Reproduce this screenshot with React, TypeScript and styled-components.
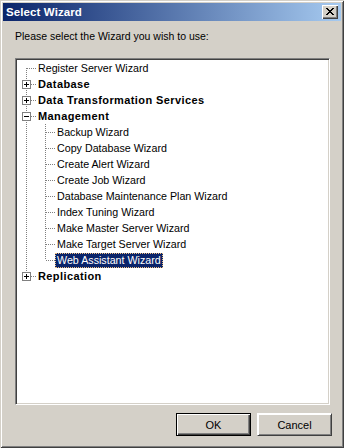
import styled, { createGlobalStyle } from "styled-components";

const GlobalStyle = createGlobalStyle`
  html, body {
    margin: 0;
    padding: 0;
    background: #d4d0c8;
  }
`;

type Node = {
  label: string;
  bold?: boolean;
  expander?: "plus" | "minus";
  children?: Node[];
  selected?: boolean;
};

const tree: Node[] = [
  { label: "Register Server Wizard" },
  { label: "Database", bold: true, expander: "plus" },
  { label: "Data Transformation Services", bold: true, expander: "plus" },
  {
    label: "Management",
    bold: true,
    expander: "minus",
    children: [
      { label: "Backup Wizard" },
      { label: "Copy Database Wizard" },
      { label: "Create Alert Wizard" },
      { label: "Create Job Wizard" },
      { label: "Database Maintenance Plan Wizard" },
      { label: "Index Tuning Wizard" },
      { label: "Make Master Server Wizard" },
      { label: "Make Target Server Wizard" },
      { label: "Web Assistant Wizard", selected: true },
    ],
  },
  { label: "Replication", bold: true, expander: "plus" },
];

// one 19px indent column: guides drawn with dotted strokes
const Guide = ({
  up,
  down,
  across,
  expander,
}: {
  up?: boolean;
  down?: boolean;
  across?: boolean;
  expander?: "plus" | "minus";
}) => (
  <GuideCell width="19" height="16" viewBox="0 0 19 16">
    <g stroke="#808080" strokeWidth="1" strokeDasharray="1 1" shapeRendering="crispEdges">
      {up && <line x1="9.5" y1="0" x2="9.5" y2="8" />}
      {down && <line x1="9.5" y1="8" x2="9.5" y2="16" />}
      {across && <line x1="10" y1="8.5" x2="19" y2="8.5" />}
    </g>
    {expander && (
      <g shapeRendering="crispEdges">
        <rect x="5.5" y="4.5" width="8" height="8" fill="#fff" stroke="#808080" />
        <line x1="7" y1="8.5" x2="12" y2="8.5" stroke="#000" />
        {expander === "plus" && <line x1="9.5" y1="6" x2="9.5" y2="11" stroke="#000" />}
      </g>
    )}
  </GuideCell>
);

const App = () => {
  const rows: JSX.Element[] = [];
  tree.forEach((node, i) => {
    const last = i === tree.length - 1;
    rows.push(
      <Row key={node.label}>
        <Guide up={i > 0} down={!last} across expander={node.expander} />
        <Label $bold={node.bold} $selected={node.selected}>
          {node.label}
        </Label>
      </Row>
    );
    node.children?.forEach((child, j) => {
      const lastChild = j === node.children!.length - 1;
      rows.push(
        <Row key={child.label}>
          <Guide up={!last} down={!last} />
          <Guide up down={!lastChild} across />
          <Label $bold={child.bold} $selected={child.selected}>
            {child.label}
          </Label>
        </Row>
      );
    });
  });

  return (
    <>
      <GlobalStyle />
      <Window>
        <TitleBar>
          <Title>Select Wizard</Title>
          <CloseButton>
            <svg width="8" height="7" viewBox="0 0 8 7" shapeRendering="crispEdges">
              <path
                d="M0 0h2v1h-2zM6 0h2v1h-2zM1 1h2v1h-2zM5 1h2v1h-2zM2 2h4v1h-4zM3 3h2v1h-2zM2 4h4v1h-4zM1 5h2v1h-2zM5 5h2v1h-2zM0 6h2v1h-2zM6 6h2v1h-2z"
                fill="#000"
              />
            </svg>
          </CloseButton>
        </TitleBar>
        <Body>
          <Prompt>Please select the Wizard you wish to use:</Prompt>
          <TreeView>{rows}</TreeView>
          <ButtonRow>
            <Button $default>OK</Button>
            <Button>Cancel</Button>
          </ButtonRow>
        </Body>
      </Window>
    </>
  );
};

const Window = styled.div`
  width: 344px;
  height: 448px;
  box-sizing: border-box;
  padding: 3px;
  display: flex;
  flex-direction: column;
  background: #d4d0c8;
  box-shadow: inset 1px 1px #d4d0c8, inset -1px -1px #404040,
    inset 2px 2px #ffffff, inset -2px -2px #808080;
  font-family: "Liberation Sans", Arial, sans-serif;
  font-size: 11px;
  color: #000;
`;

const TitleBar = styled.div`
  height: 18px;
  display: flex;
  align-items: center;
  justify-content: space-between;
  padding: 0 3px 0 3px;
  background: linear-gradient(to right, #0a246a, #a6caf0);
`;

const Title = styled.span`
  color: #fff;
  font-weight: bold;
  font-size: 11.5px;
  letter-spacing: 0.1px;
`;

const CloseButton = styled.div`
  width: 16px;
  height: 14px;
  box-sizing: border-box;
  display: flex;
  align-items: center;
  justify-content: center;
  background: #d4d0c8;
  box-shadow: inset 1px 1px #ffffff, inset -1px -1px #404040,
    inset -2px -2px #808080;
  padding-bottom: 1px;
`;

const Body = styled.div`
  flex: 1;
  display: flex;
  flex-direction: column;
  padding: 9px 9px 9px 12px;
`;

const Prompt = styled.div`
  height: 13px;
  line-height: 13px;
  font-size: 10.5px;
  margin-bottom: 15px;
`;

const TreeView = styled.div`
  height: 347px;
  margin-right: 2px;
  box-sizing: border-box;
  background: #fff;
  border: 1px solid;
  border-color: #808080 #ffffff #ffffff #808080;
  box-shadow: inset 1px 1px #404040, inset -1px -1px #d4d0c8;
  padding: 1px;
  display: flex;
  flex-direction: column;
`;

const Row = styled.div`
  height: 16px;
  display: flex;
  align-items: stretch;
  white-space: nowrap;
`;

const GuideCell = styled.svg`
  flex: none;
  display: block;
`;

const Label = styled.span<{ $bold?: boolean; $selected?: boolean }>`
  padding: 0 2px;
  margin: 1px 0 0;
  height: 15px;
  line-height: 14px;
  box-sizing: border-box;
  font-size: ${(p) => (p.$bold ? "11px" : "10.7px")};
  letter-spacing: ${(p) => (p.$bold ? "0.4px" : "0")};
  font-weight: ${(p) => (p.$bold ? "bold" : "normal")};
  background: ${(p) => (p.$selected ? "#0a246a" : "transparent")};
  color: ${(p) => (p.$selected ? "#fff" : "#000")};
  outline: ${(p) => (p.$selected ? "1px dotted #f0c080" : "none")};
  outline-offset: -1px;
`;

const ButtonRow = styled.div`
  margin-top: 8px;
  display: flex;
  justify-content: flex-end;
  gap: 6px;
`;

const Button = styled.div<{ $default?: boolean }>`
  width: 75px;
  height: 23px;
  box-sizing: border-box;
  display: flex;
  align-items: center;
  justify-content: center;
  background: #d4d0c8;
  border: 1px solid ${(p) => (p.$default ? "#000" : "transparent")};
  box-shadow: ${(p) =>
    p.$default
      ? "inset 1px 1px #ffffff, inset -1px -1px #404040, inset -2px -2px #808080"
      : "inset 1px 1px #ffffff, inset -1px -1px #808080"};
  ${(p) =>
    !p.$default &&
    `border-color: #ffffff #404040 #404040 #ffffff;`}
`;

export default App;
